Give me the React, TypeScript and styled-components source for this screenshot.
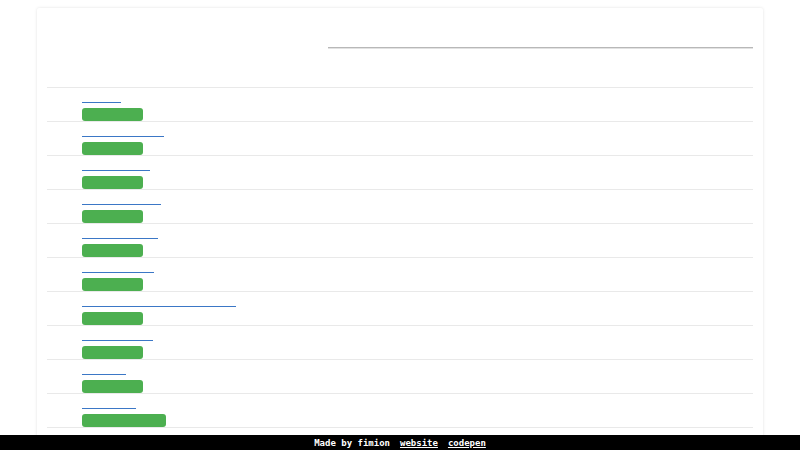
import React from "react";
import styled, { createGlobalStyle } from "styled-components";

const Global = createGlobalStyle`
  html, body { margin: 0; padding: 0; background: #fff; }
  body { font-family: "Liberation Sans", Arial, sans-serif; }
`;

const Card = styled.div`
  width: 726px;
  box-sizing: border-box;
  margin: 8px auto 40px;
  padding: 0 10px;
  background: #fff;
  box-shadow: 0 0 3px rgba(0, 0, 0, 0.12);
  border-radius: 2px;
`;

const Header = styled.div`
  height: 80px;
  box-sizing: border-box;
  display: flex;
  justify-content: flex-end;
  align-items: flex-start;
  border-bottom: 1px solid #e9e9e9;
`;

const Search = styled.input`
  display: block;
  box-sizing: border-box;
  margin-top: 31px;
  width: 425px;
  height: 9px;
  border: none;
  border-bottom: 1px solid #b8b8b8;
  box-shadow: 0 1px 0 #e2e2e2;
  outline: none;
  padding: 0;
  background: transparent;
`;

const Row = styled.div`
  height: 33px;
  box-sizing: content-box;
  border-bottom: 1px solid #e9e9e9;
  padding-left: 35px;
  display: flex;
  flex-direction: column;
  align-items: flex-start;
`;

const Link = styled.a<{ $w: number }>`
  display: block;
  width: ${(p) => p.$w}px;
  height: 1px;
  margin-top: 14px;
  background: #3b77c6;
`;

const Badge = styled.span<{ $w: number }>`
  display: block;
  width: ${(p) => p.$w}px;
  height: 13px;
  margin-top: 5px;
  border-radius: 3px;
  background: #4caf50;
`;

const Footer = styled.footer`
  position: fixed;
  left: 0;
  right: 0;
  bottom: 0;
  height: 15px;
  background: #000;
  color: #fff;
  font-family: "DejaVu Sans Mono", monospace;
  font-size: 9px;
  font-weight: bold;
  display: flex;
  justify-content: center;
  align-items: center;
  gap: 10px;
  white-space: pre;
`;

const FootLink = styled.a`
  color: #fff;
  text-decoration: underline;
`;

const rows = [
  { link: 39, badge: 61 },
  { link: 82, badge: 61 },
  { link: 68, badge: 61 },
  { link: 79, badge: 61 },
  { link: 76, badge: 61 },
  { link: 72, badge: 61 },
  { link: 154, badge: 61 },
  { link: 71, badge: 61 },
  { link: 44, badge: 61 },
  { link: 54, badge: 84 },
  { link: 60, badge: 61 },
];

export default function App() {
  return (
    <>
      <Global />
      <Card>
        <Header>
          <Search type="text" aria-label="search" />
        </Header>
        {rows.map((r, i) => (
          <Row key={i}>
            <Link href="#" $w={r.link} />
            <Badge $w={r.badge} />
          </Row>
        ))}
      </Card>
      <Footer>
        <span>Made by fimion</span>
        <FootLink href="#">website</FootLink>
        <FootLink href="#">codepen</FootLink>
      </Footer>
    </>
  );
}
